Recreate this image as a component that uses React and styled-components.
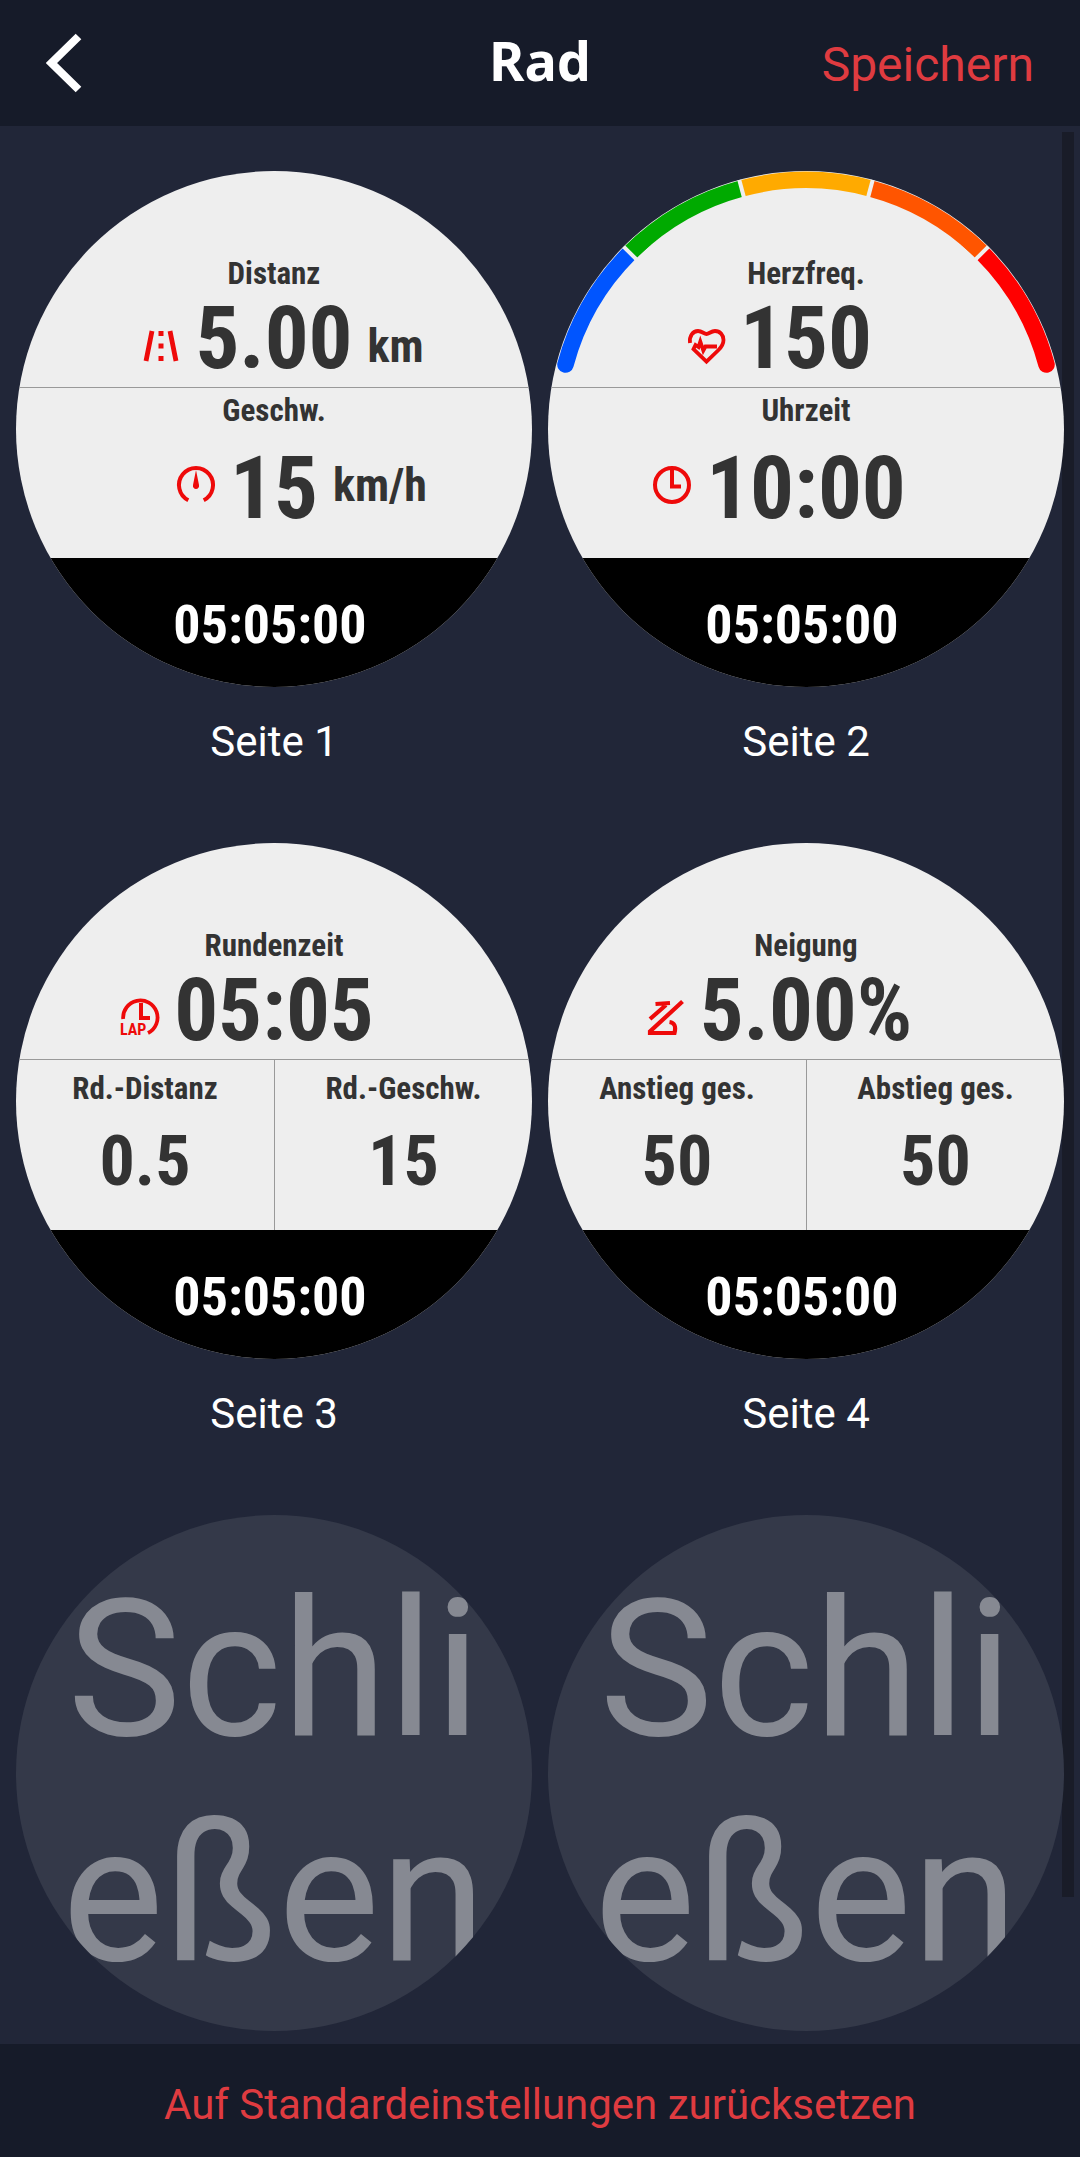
import styled, { createGlobalStyle } from "styled-components";

const Colors = {
  Bar: "#161b29",
  Page: "#212638",
  Track: "#191c28",
  Accent: "#df3b40",
  Dial: "#eeeeee",
  Ink: "#333333",
  Line: "#999999",
  Icon: "#ee0a0a",
  Slot: "#343949",
  SlotText: "#868992",
  White: "#ffffff",
};

const Fonts = {
  Ui: `Roboto, "Liberation Sans", sans-serif`,
  Title: `"Noto Sans", "Open Sans", sans-serif`,
  Dial: `"Roboto Condensed", "Liberation Sans Narrow", "Liberation Sans", sans-serif`,
};

const GlobalStyle = createGlobalStyle`
  * {
    box-sizing: border-box;
  }

  body {
    margin: 0;
    background-color: ${Colors.Page};
    font-family: ${Fonts.Ui};
  }
`;

const Screen = styled.div`
  display: flex;
  flex-direction: column;
  height: 100vh;
`;

const Header = styled.header`
  display: grid;
  grid-template-columns: 1fr auto 1fr;
  align-items: center;
  height: 126px;
  padding: 0 46px;
  background-color: ${Colors.Bar};
  flex-shrink: 0;
`;

const TextButton = styled.button`
  padding: 0;
  border: 0;
  background: none;
  color: ${Colors.Accent};
  font-family: ${Fonts.Ui};
  font-size: ${({ $size }) => $size}px;
  line-height: 56px;
  cursor: pointer;
`;

const BackButton = styled(TextButton)`
  display: flex;
  justify-self: start;
`;

const SaveButton = styled(TextButton)`
  justify-self: end;
  padding-top: 4px;
`;

const Title = styled.h1`
  margin: 0;
  padding-bottom: 6px;
  color: ${Colors.White};
  font-family: ${Fonts.Title};
  font-size: 54px;
  font-weight: 700;
  line-height: 72px;
`;

const Main = styled.main`
  position: relative;
  flex: 1;
  min-height: 0;
  overflow: hidden;
`;

const Pages = styled.div`
  position: relative;
  display: grid;
  grid-template-columns: 1fr 1fr;
  gap: 77px 16px;
  padding: 45px 16px 0;
`;

const ScrollThumb = styled.div`
  position: absolute;
  top: 6px;
  right: 6px;
  width: 12px;
  height: 92%;
  background-color: ${Colors.Track};
`;

const PageItem = styled.figure`
  min-width: 0;
  margin: 0;
`;

const Caption = styled.figcaption`
  margin-top: 31px;
  color: ${Colors.White};
  font-size: 42px;
  line-height: 48px;
  text-align: center;
`;

const Dial = styled.div`
  position: relative;
  display: grid;
  grid-template-rows: 217fr 170fr 129fr;
  aspect-ratio: 1;
  border-radius: 50%;
  overflow: hidden;
  background-color: ${Colors.Dial};
  color: ${Colors.Ink};
  font-family: ${Fonts.Dial};
  font-weight: 700;
`;

const Zones = styled.svg`
  position: absolute;
  inset: 0;
  width: 100%;
  height: 100%;
`;

const TopField = styled.section`
  display: flex;
  flex-direction: column;
  justify-content: flex-end;
  padding-bottom: 3px;
  border-bottom: 1px solid ${Colors.Line};
`;

const MiddleField = styled.section`
  padding-top: 5px;
  display: flex;
  flex-direction: column;
  gap: 13px;
`;

const SplitFields = styled.section`
  display: grid;
  grid-template-columns: 1fr 1fr;
`;

const SplitField = styled.div`
  display: flex;
  flex-direction: column;
  gap: 8px;
  padding-top: 11px;

  & + & {
    border-left: 1px solid ${Colors.Line};
  }
`;

const FieldLabel = styled.div`
  font-size: 31px;
  line-height: 36px;
  text-align: center;
`;

const Reading = styled.div`
  display: grid;
  grid-template-columns: 1fr auto 1fr;
  align-items: center;
  column-gap: 15px;
`;

const Value = styled.div`
  font-size: ${({ $small }) => ($small ? 70 : 87)}px;
  line-height: 92px;
  text-align: center;
`;

const Side = styled.div`
  display: flex;
  justify-self: ${({ $align }) => $align};
  padding-top: ${({ $low }) => ($low ? 16 : 0)}px;
  padding-bottom: ${({ $low }) => ($low ? 0 : 6)}px;
  font-size: 46px;
  line-height: 48px;
`;

const Timer = styled.div`
  display: flex;
  align-items: center;
  justify-content: center;
  padding: 4px 8px 0 0;
  background-color: #000;
  color: ${Colors.White};
  font-size: 54px;
  line-height: 64px;
`;

const Slot = styled.button`
  display: block;
  width: 100%;
  aspect-ratio: 1;
  padding: 42px 24px 0;
  border: 0;
  border-radius: 50%;
  overflow: hidden;
  background-color: ${Colors.Slot};
  color: ${Colors.SlotText};
  font-family: ${Fonts.Ui};
  font-size: 192px;
  line-height: 225px;
  text-align: center;
  word-break: break-all;
`;

const SlotText = styled.span`
  display: block;
  height: 100%;
`;

const Footer = styled.footer`
  display: flex;
  justify-content: center;
  align-items: center;
  height: 113px;
  padding-top: 8px;
  background-color: ${Colors.Bar};
  flex-shrink: 0;
`;

const IconSvg = styled.svg`
  width: 38px;
  height: 38px;
  fill: none;
  stroke: ${Colors.Icon};
  stroke-width: 4;
`;

const IconText = styled.text`
  fill: ${Colors.Icon};
  stroke: none;
  font-family: ${Fonts.Dial};
  font-size: 16px;
  font-weight: 700;
`;

const Icons = {
  road: (
    <>
      <path d="M10 4 4 34M28 4l6 30" strokeWidth="4.8" />
      <path d="M19 4v5M19 16.5v5M19 29v5" strokeWidth="5" />
    </>
  ),
  gauge: (
    <>
      <path d="M11.3 34.2A17 17 0 1 1 26.7 34.2" />
      <path
        d="M19 4 22 19a3.1 3.1 0 1 1-6 0Z"
        fill={Colors.Icon}
        stroke="none"
      />
    </>
  ),
  heart: (
    <path
      d="M3 16C2 9 6 4 11 4c4 0 6 3 8.500 3S24 4 28 4c5 0 8.500 4 8.500 9 0 4-2 7-5 10L19.500 34.500 6.500 22 8.500 18l3 2 1.800-5.500 3 9L18.500 19.500H30"
      strokeWidth="3.8"
    />
  ),
  clock: (
    <>
      <circle cx="19" cy="19" r="17" />
      <path d="M19 3v17.500h9" />
    </>
  ),
  lap: (
    <>
      <path d="M2.200 20A17.200 17.200 0 1 1 27 34" strokeWidth="3.800" />
      <path d="M20 4v15h9" strokeWidth="4" />
      <IconText x="-1" y="36">
        LAP
      </IconText>
    </>
  ),
  slope: (
    <path
      d="M3 20 19 6M8.500 5 23 4M35.500 2.500 3 32.500V34h24.500q2.500-10-5-11"
      strokeWidth="4.200"
    />
  ),
};

function Icon({ name }) {
  return (
    <IconSvg viewBox="0 0 38 38" aria-hidden="true" overflow="visible">
      {Icons[name]}
    </IconSvg>
  );
}

const ZoneColors = ["#0055ff", "#00aa00", "#ffaa00", "#ff5500", "#ff0000"];

const point = (deg, r = 249) => {
  const rad = (deg * Math.PI) / 180;
  return `${258 + r * Math.sin(rad)} ${258 - r * Math.cos(rad)}`;
};

function HeartZones() {
  return (
    <Zones viewBox="0 0 516 516" fill="none" strokeWidth="16.5">
      {ZoneColors.map((color, i) => {
        const from = -75 + i * 30;
        return (
          <path
            key={color}
            d={`M${point(from)}A249 249 0 0 1 ${point(from + 30)}`}
            stroke={color}
            strokeLinecap={i === 0 || i === 4 ? "round" : "butt"}
          />
        );
      })}
      {/* redraw the green and dark orange ends over the round caps */}
      <path d={`M${point(-45)}A249 249 0 0 1 ${point(-40)}`} stroke={ZoneColors[1]} />
      <path d={`M${point(40)}A249 249 0 0 1 ${point(45)}`} stroke={ZoneColors[3]} />
      {[-45, -15, 15, 45].map((deg) => (
        <path
          key={deg}
          d={`M${point(deg, 238)}L${point(deg, 258)}`}
          stroke={Colors.Dial}
          strokeWidth="4"
        />
      ))}
    </Zones>
  );
}

function Metric({ icon, value, unit, low }) {
  return (
    <Reading>
      <Side $align="end" $low={low}>
        <Icon name={icon} />
      </Side>
      <Value>{value}</Value>
      {unit && (
        <Side $align="start" $low={low}>
          {unit}
        </Side>
      )}
    </Reading>
  );
}

const AllPages = [
  {
    Id: 1,
    Top: { label: "Distanz", icon: "road", value: "5.00", unit: "km" },
    Middle: { label: "Geschw.", icon: "gauge", value: "15", unit: "km/h" },
  },
  {
    Id: 2,
    Zones: true,
    Top: { label: "Herzfreq.", icon: "heart", value: "150" },
    Middle: { label: "Uhrzeit", icon: "clock", value: "10:00" },
  },
  {
    Id: 3,
    Top: { label: "Rundenzeit", icon: "lap", value: "05:05" },
    Split: [
      { label: "Rd.-Distanz", value: "0.5" },
      { label: "Rd.-Geschw.", value: "15" },
    ],
  },
  {
    Id: 4,
    Top: { label: "Neigung", icon: "slope", value: "5.00%" },
    Split: [
      { label: "Anstieg ges.", value: "50" },
      { label: "Abstieg ges.", value: "50" },
    ],
  },
];

function WatchPage({ page }) {
  return (
    <PageItem>
      <Dial>
        <TopField>
          <FieldLabel>{page.Top.label}</FieldLabel>
          <Metric {...page.Top} low />
        </TopField>
        {page.Middle && (
          <MiddleField>
            <FieldLabel>{page.Middle.label}</FieldLabel>
            <Metric {...page.Middle} />
          </MiddleField>
        )}
        {page.Split && (
          <SplitFields>
            {page.Split.map((field) => (
              <SplitField key={field.label}>
                <FieldLabel>{field.label}</FieldLabel>
                <Value $small>{field.value}</Value>
              </SplitField>
            ))}
          </SplitFields>
        )}
        <Timer>05:05:00</Timer>
        {page.Zones && <HeartZones />}
      </Dial>
      <Caption>Seite {page.Id}</Caption>
    </PageItem>
  );
}

export default function App() {
  return (
    <Screen>
      <GlobalStyle />
      <Header>
        <BackButton type="button" aria-label="Zurück">
          <svg width="48" height="64" viewBox="0 0 48 64" fill="none">
            <path d="M32.500 5.500 5.500 32l27 26.500" stroke="#fff" strokeWidth="8" />
          </svg>
        </BackButton>
        <Title>Rad</Title>
        <SaveButton type="button" $size={48}>
          Speichern
        </SaveButton>
      </Header>
      <Main>
        <ScrollThumb />
        <Pages>
          {AllPages.map((page) => (
            <WatchPage key={page.Id} page={page} />
          ))}
          {[5, 6].map((id) => (
            <Slot key={id} type="button">
              <SlotText>Schließen</SlotText>
            </Slot>
          ))}
        </Pages>
      </Main>
      <Footer>
        <TextButton type="button" $size={42}>
          Auf Standardeinstellungen zurücksetzen
        </TextButton>
      </Footer>
    </Screen>
  );
}
